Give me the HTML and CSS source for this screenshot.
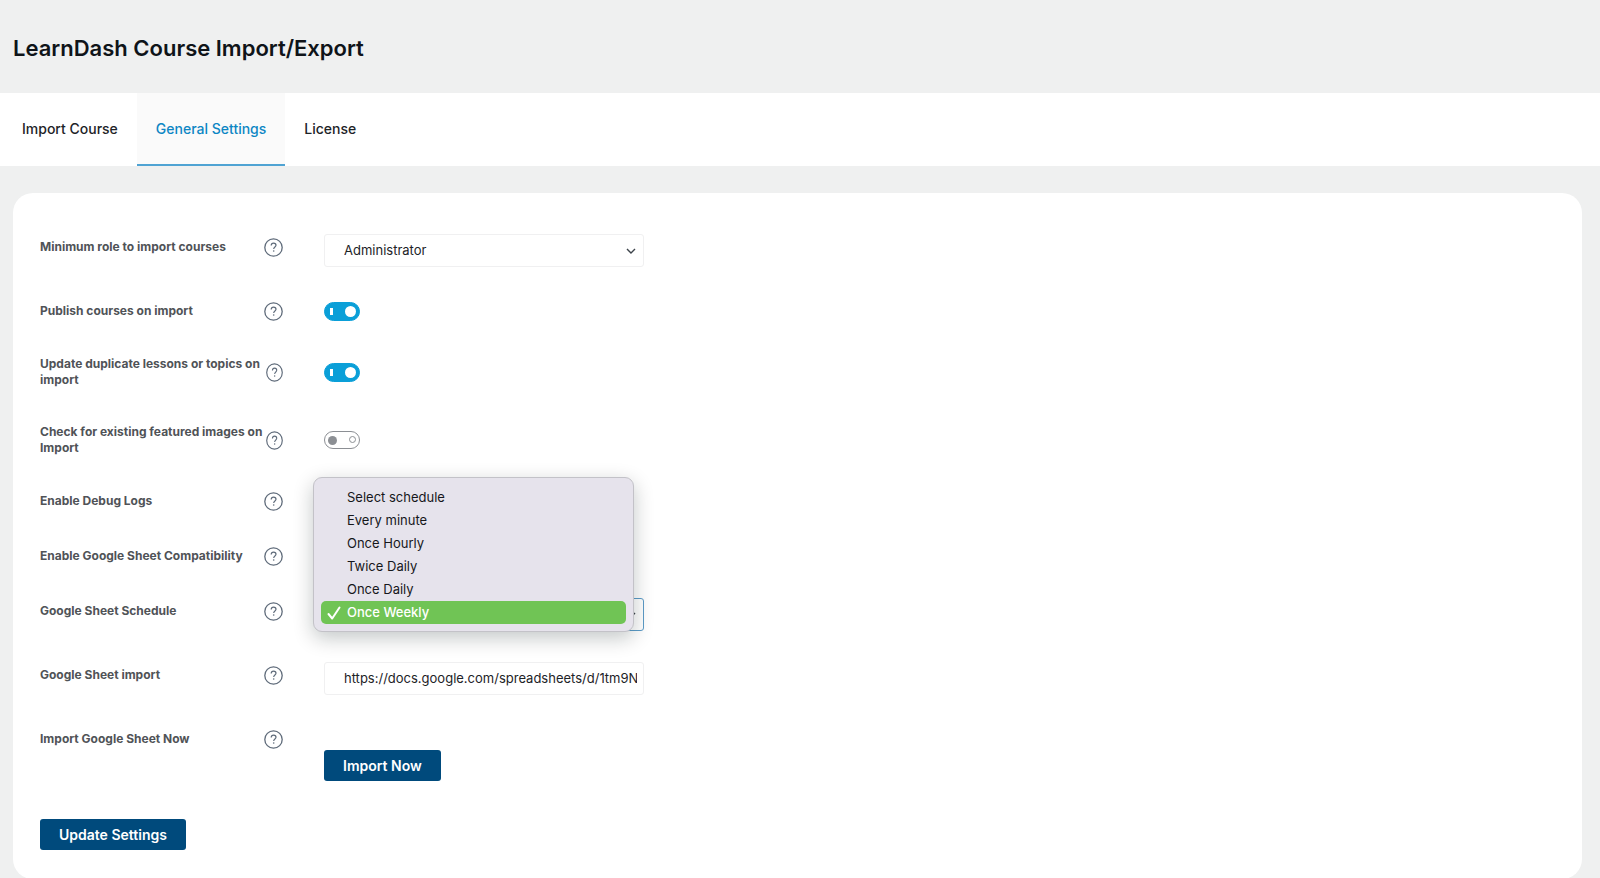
FILE: index.html
```
<!DOCTYPE html>
<html lang="en">
<head>
  <meta charset="UTF-8" />
  <meta name="viewport" content="width=device-width, initial-scale=1" />
  <title>LearnDash Course Import/Export</title>
  <link rel="stylesheet" href="styles.css">
</head>
<body>
  <svg class="sprite" aria-hidden="true">
    <symbol id="help" viewBox="0 0 19 19" preserveAspectRatio="none">
      <circle cx="9.5" cy="9.5" r="8.7" fill="none" stroke="currentColor" stroke-width="1.3" />
      <path d="M7.2 7.5C7.2 6 8.2 5.2 9.6 5.2S12 6 12 7.3C12 9 9.7 8.9 9.7 10.9" fill="none" stroke="currentColor" stroke-width="1.2" />
      <circle cx="9.7" cy="13" r="0.8" fill="currentColor" />
    </symbol>
  </svg>

  <header class="page-header">
    <h1>LearnDash Course Import/Export</h1>
  </header>

  <nav class="tabs">
    <a href="#import">Import Course</a>
    <a href="#settings" class="active">General Settings</a>
    <a href="#license">License</a>
  </nav>

  <form class="card">
    <div class="row">
      <div class="label">
        <label for="role">Minimum role to import courses</label>
        <svg class="help"><use href="#help" /></svg>
      </div>
      <div class="control">
        <select id="role" class="field">
          <option>Administrator</option>
        </select>
        <svg class="arrow" viewBox="0 0 10 6"><path d="M1 1l4 4 4-4" /></svg>
      </div>
    </div>

    <div class="row row-toggle">
      <div class="label">
        <label for="publish">Publish courses on import</label>
        <svg class="help"><use href="#help" /></svg>
      </div>
      <div class="control"><input type="checkbox" class="toggle" id="publish" checked></div>
    </div>

    <div class="row row-double">
      <div class="label">
        <label for="duplicate">Update duplicate lessons or topics on<br>import</label>
        <svg class="help help-narrow"><use href="#help" /></svg>
      </div>
      <div class="control"><input type="checkbox" class="toggle" id="duplicate" checked></div>
    </div>

    <div class="row row-toggle">
      <div class="label">
        <label for="images">Check for existing featured images on<br>Import</label>
        <svg class="help help-narrow"><use href="#help" /></svg>
      </div>
      <div class="control"><input type="checkbox" class="toggle" id="images"></div>
    </div>

    <div class="row row-compact">
      <div class="label">
        <label for="debug">Enable Debug Logs</label>
        <svg class="help"><use href="#help" /></svg>
      </div>
      <div class="control"><input type="checkbox" class="toggle" id="debug"></div>
    </div>

    <div class="row row-compact">
      <div class="label">
        <label for="compat">Enable Google Sheet Compatibility</label>
        <svg class="help"><use href="#help" /></svg>
      </div>
      <div class="control"><input type="checkbox" class="toggle" id="compat" checked></div>
    </div>

    <div class="row">
      <div class="label">
        <label for="schedule">Google Sheet Schedule</label>
        <svg class="help"><use href="#help" /></svg>
      </div>
      <div class="control">
        <select id="schedule" class="field field-open">
          <option>Once Weekly</option>
        </select>
        <svg class="arrow" viewBox="0 0 10 6"><path d="M1 1l4 4 4-4" /></svg>
        <ul class="menu" role="listbox" aria-label="Google Sheet Schedule">
          <li role="option">Select schedule</li>
          <li role="option">Every minute</li>
          <li role="option">Once Hourly</li>
          <li role="option">Twice Daily</li>
          <li role="option">Once Daily</li>
          <li role="option" class="selected" aria-selected="true">
            <svg class="check" viewBox="0 0 14 14"><path d="M1.5 8l3.7 4.5L12.5 1.5" /></svg>Once Weekly
          </li>
        </ul>
      </div>
    </div>

    <div class="row">
      <div class="label">
        <label for="sheet">Google Sheet import</label>
        <svg class="help"><use href="#help" /></svg>
      </div>
      <div class="control">
        <input type="text" id="sheet" class="field" value="https://docs.google.com/spreadsheets/d/1tm9N">
      </div>
    </div>

    <div class="row row-last">
      <div class="label">
        <label for="import-now">Import Google Sheet Now</label>
        <svg class="help"><use href="#help" /></svg>
      </div>
      <div class="control control-button">
        <button type="button" class="button" id="import-now">Import Now</button>
      </div>
    </div>

    <button type="submit" class="button">Update Settings</button>
  </form>
</body>
</html>
```
FILE: styles.css
```
:root {
  --grey-bg: #eff0f0;
  --navy: #004a7c;
  --blue: #0a9fd8;
  --link: #0d86c4;
  --text: #1d2327;
  --label: #505357;
}

*,
*::before,
*::after {
  box-sizing: border-box;
}

body {
  margin: 0;
  font-family: Inter, "Liberation Sans", sans-serif;
  font-size: 13px;
  background: var(--grey-bg);
  color: var(--text);
}

.sprite {
  display: none;
}

.page-header {
  padding: 32px 13px 29px;
}

h1 {
  margin: 0;
  font-size: 22px;
  line-height: 32px;
  font-weight: 600;
  color: #0f1419;
}

.tabs {
  display: flex;
  height: 73px;
  padding-left: 3px;
  background: #fff;
}

.tabs a {
  display: flex;
  align-items: center;
  padding: 0 19px;
  border-bottom: 2px solid transparent;
  font-size: 14px;
  font-weight: 500;
  color: var(--text);
  text-decoration: none;
}

.tabs .active {
  color: var(--link);
  background: #fafafa;
  border-bottom-color: #4fa3d3;
}

.card {
  margin: 27px 18px 0 13px;
  padding: 41px 27px 29px;
  background: #fff;
  border-radius: 20px;
}

.row {
  display: flex;
  align-items: flex-start;
  gap: 41px;
  margin-bottom: 31px;
}

.row-toggle {
  margin-bottom: 32px;
}

.row-double {
  margin-bottom: 36px;
}

.row-compact {
  margin-bottom: 29px;
}

.row-last {
  margin-bottom: 38px;
}

.label {
  display: flex;
  align-items: center;
  justify-content: space-between;
  width: 243px;
  min-height: 26px;
  font-size: 12px;
  line-height: 16px;
  font-weight: 700;
  color: var(--label);
  white-space: nowrap;
}

.help {
  flex: none;
  width: 19px;
  height: 19px;
  color: #5f6b7a;
}

.help-narrow {
  width: 17px;
}

.control {
  position: relative;
  display: flex;
  align-items: center;
  align-self: stretch;
  width: 320px;
}

.control-button {
  padding-top: 24px;
}

.field {
  appearance: none;
  width: 100%;
  height: 33px;
  padding: 0 6px 2px 19px;
  border: 1px solid #f0f0f1;
  border-radius: 3px;
  background: #fff;
  font: inherit;
  color: var(--text);
}

.field-open {
  border-color: #5c9cc8;
}

.arrow {
  position: absolute;
  right: 8px;
  width: 10px;
  height: 6px;
  overflow: visible;
  fill: none;
  stroke: #3c434a;
  stroke-width: 1.4;
}

.toggle {
  appearance: none;
  display: flex;
  align-items: center;
  justify-content: space-between;
  width: 36px;
  height: 18px;
  margin: 0;
  padding: 0 3px;
  border: 1px solid #8c8f94;
  border-radius: 9px;
  background: #fff;
}

.toggle::before {
  content: "";
  width: 9px;
  height: 9px;
  border-radius: 50%;
  background: #8c8f94;
}

.toggle::after {
  content: "";
  width: 7px;
  height: 7px;
  margin-bottom: 2px;
  border: 1px solid #8c8f94;
  border-radius: 50%;
}

.toggle:checked {
  height: 19px;
  border-color: var(--blue);
  border-radius: 10px;
  background: var(--blue);
}

.toggle:checked::before {
  width: 3px;
  height: 7px;
  margin-left: 2px;
  border-radius: 0;
  background: #fff;
}

.toggle:checked::after {
  width: 11px;
  height: 11px;
  margin: 0;
  border: 0;
  background: #fff;
}

.menu {
  position: absolute;
  left: -11px;
  bottom: -1px;
  width: 321px;
  margin: 0;
  padding: 8px 7px 7px;
  list-style: none;
  background: #e6e3ec;
  border: 1px solid #c3c2c8;
  border-radius: 9px;
  box-shadow: 0 6px 20px rgba(0, 20, 20, 0.24);
  color: #16171b;
}

.menu li {
  position: relative;
  padding-left: 26px;
  line-height: 23px;
  border-radius: 5px;
}

.menu .selected {
  color: #fff;
  font-weight: 500;
  background: #70c455;
}

.check {
  position: absolute;
  left: 6px;
  top: 5px;
  width: 14px;
  height: 14px;
  fill: none;
  stroke: #fff;
  stroke-width: 2;
  stroke-linecap: round;
  stroke-linejoin: round;
}

.button {
  height: 31px;
  padding: 0 19px;
  border: 0;
  border-radius: 3px;
  background: var(--navy);
  color: #fff;
  font: inherit;
  font-size: 14px;
  font-weight: 600;
}
```
